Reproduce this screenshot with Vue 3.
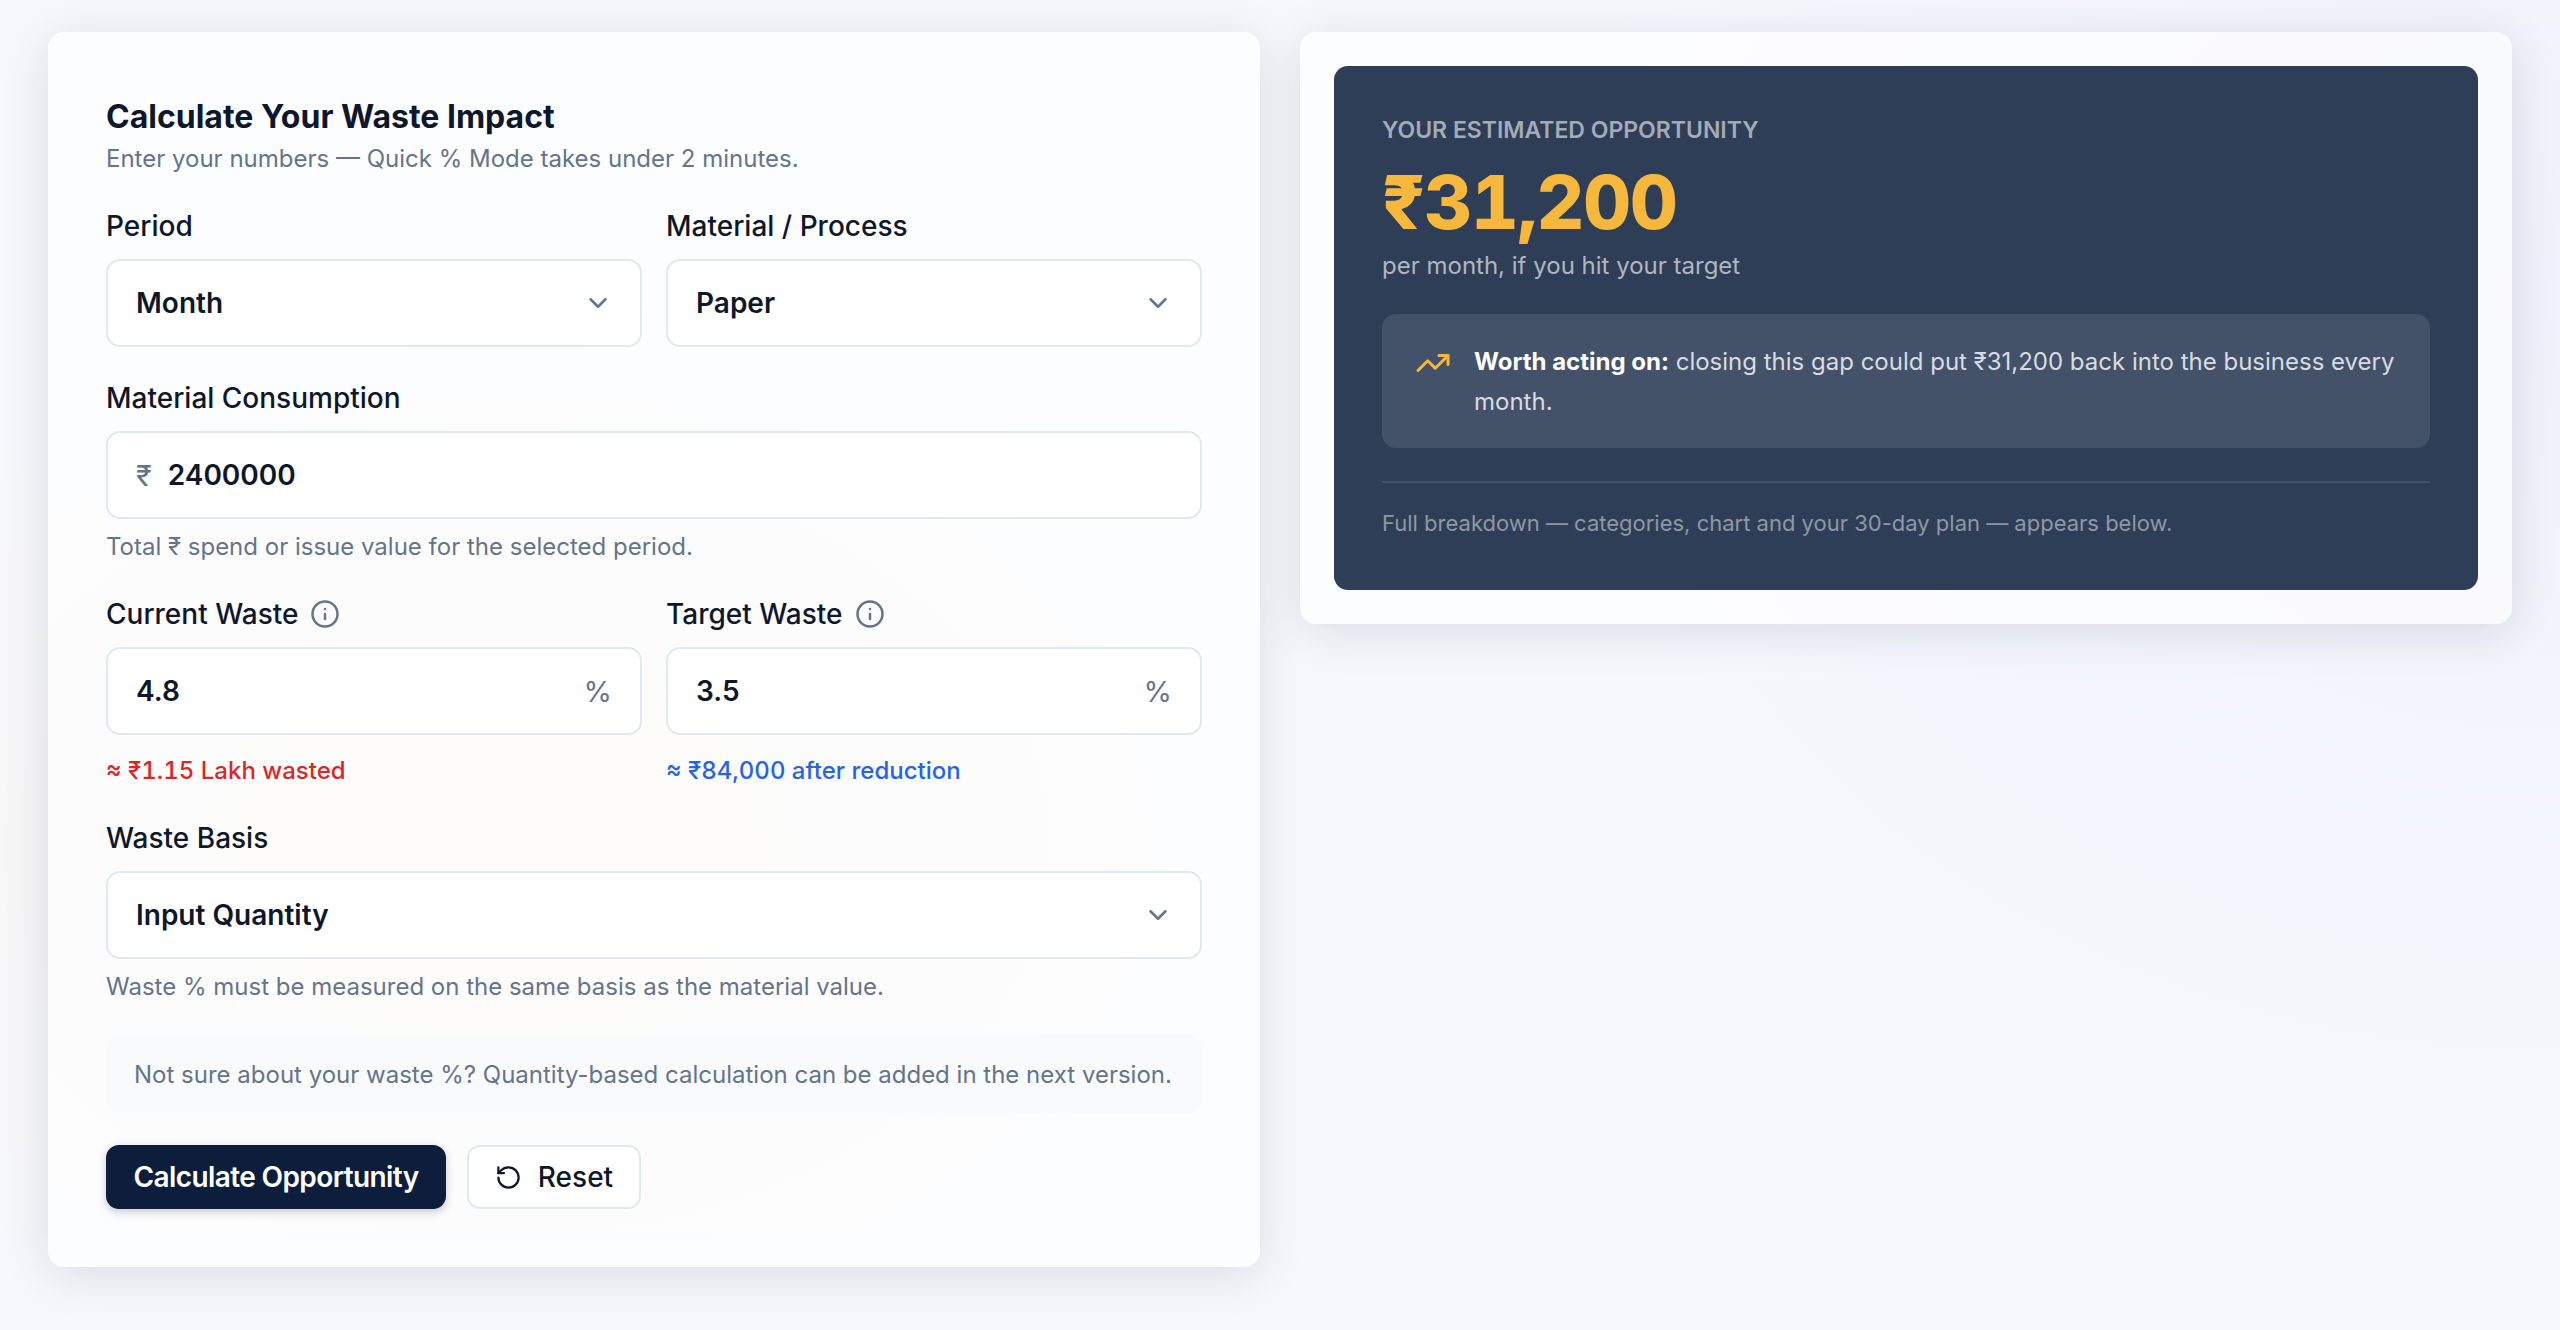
<template>
  <div class="page">
    <!-- форма -->
    <section class="card form-card">
      <h2 class="title">Calculate Your Waste Impact</h2>
      <p class="subtitle">Enter your numbers — Quick % Mode takes under 2 minutes.</p>

      <div class="two-col row">
        <div class="group">
          <label class="label">Period</label>
          <div class="field">
            <select class="control">
              <option v-for="p in periods" :key="p">{{ p }}</option>
            </select>
            <svg class="chevron" viewBox="0 0 24 24"><path d="m6 9 6 6 6-6" /></svg>
          </div>
        </div>
        <div class="group">
          <label class="label">Material / Process</label>
          <div class="field">
            <select class="control">
              <option v-for="m in materials" :key="m">{{ m }}</option>
            </select>
            <svg class="chevron" viewBox="0 0 24 24"><path d="m6 9 6 6 6-6" /></svg>
          </div>
        </div>
      </div>

      <div class="group row">
        <label class="label">Material Consumption</label>
        <div class="field">
          <span class="prefix">₹</span>
          <input class="control" :value="consumption" />
        </div>
        <p class="hint">Total ₹ spend or issue value for the selected period.</p>
      </div>

      <div class="two-col row">
        <div class="group" v-for="w in wasteFields" :key="w.label">
          <label class="label">
            {{ w.label }}
            <svg class="info" viewBox="0 0 24 24">
              <circle cx="12" cy="12" r="10" />
              <path d="M12 16v-4M12 8h.01" />
            </svg>
          </label>
          <div class="field">
            <input class="control" :value="w.value" />
            <span class="suffix">%</span>
          </div>
          <p class="result" :class="w.tone">{{ w.note }}</p>
        </div>
      </div>

      <div class="group row">
        <label class="label">Waste Basis</label>
        <div class="field">
          <select class="control">
            <option>Input Quantity</option>
            <option>Output Quantity</option>
          </select>
          <svg class="chevron" viewBox="0 0 24 24"><path d="m6 9 6 6 6-6" /></svg>
        </div>
        <p class="hint">Waste % must be measured on the same basis as the material value.</p>
      </div>

      <div class="note">Not sure about your waste %? Quantity-based calculation can be added in the next version.</div>

      <div class="actions">
        <button class="btn btn-primary">Calculate Opportunity</button>
        <button class="btn btn-reset">
          <svg class="reset-icon" viewBox="0 0 24 24">
            <path d="M3 12a9 9 0 1 0 9-9 9.75 9.75 0 0 0-6.74 2.74L3 8" />
            <path d="M3 3v5h5" />
          </svg>
          Reset
        </button>
      </div>
    </section>

    <!-- результат -->
    <section class="card result-card">
      <div class="panel">
        <div class="eyebrow">YOUR ESTIMATED OPPORTUNITY</div>
        <div class="amount">₹31,200</div>
        <div class="per">per month, if you hit your target</div>

        <div class="callout">
          <svg class="trend" viewBox="0 0 24 24">
            <path d="M22 7l-8.5 8.5-5-5L2 17" />
            <path d="M16 7h6v6" />
          </svg>
          <p><strong>Worth acting on:</strong> closing this gap could put ₹31,200 back into the business every month.</p>
        </div>

        <div class="footnote">Full breakdown — categories, chart and your 30-day plan — appears below.</div>
      </div>
    </section>
  </div>
</template>

<script setup>
import { ref } from 'vue'

const periods = ['Month', 'Quarter', 'Year']
const materials = ['Paper', 'Ink', 'Plastic']
const consumption = ref('2400000')

const wasteFields = [
  { label: 'Current Waste', value: '4.8', note: '≈ ₹1.15 Lakh wasted', tone: 'red' },
  { label: 'Target Waste', value: '3.5', note: '≈ ₹84,000 after reduction', tone: 'blue' }
]
</script>

<style>
html, body {
  background: #f7f8fd;
}
</style>

<style scoped>
.page {
  box-sizing: border-box;
  min-height: 1330px;
  padding: 32px 48px;
  display: grid;
  grid-template-columns: minmax(0, 1fr) minmax(0, 1fr);
  gap: 40px;
  align-items: start;
  font-family: Inter, "Noto Sans", sans-serif;
  color: #0f172a;
  /* тёплое пятно слева и холодное справа */
  background:
    radial-gradient(800px 560px at 500px 850px, #f8f5f0 0%, rgba(248, 245, 240, 0) 100%) 0 0 / 1400px 1235px no-repeat,
    radial-gradient(1000px 800px at 2560px 300px, #eff1fc 0%, rgba(239, 241, 252, 0) 100%),
    #f7f8fd;
}

.card {
  background: rgba(255, 255, 255, 0.65);
  border-radius: 16px;
  box-shadow: 0 8px 48px rgba(15, 23, 42, 0.12);
}

.form-card {
  box-sizing: border-box;
  padding: 65px 58px 58px;
}

.title {
  margin: 0;
  font-size: 32px;
  line-height: 40px;
  font-weight: 700;
}

.subtitle {
  margin: 6px 0 0;
  font-size: 24px;
  line-height: 32px;
  color: #64748b;
}

.two-col {
  display: grid;
  grid-template-columns: minmax(0, 1fr) minmax(0, 1fr);
  gap: 24px;
}

.row { margin-top: 32px; }

.label {
  display: flex;
  align-items: center;
  gap: 12px;
  font-size: 28px;
  font-weight: 500;
  line-height: 38px;
  margin-bottom: 14px;
}

.field {
  position: relative;
  box-sizing: border-box;
  height: 88px;
  display: flex;
  align-items: center;
  background: #fff;
  border: 2px solid #e2e8f0;
  border-radius: 14px;
  padding: 0 28px;
}

.control {
  flex: 1;
  min-width: 0;
  border: none;
  outline: none;
  background: transparent;
  padding: 0;
  appearance: none;
  font-family: inherit;
  font-size: 28px;
  font-weight: 600;
  color: #0f172a;
}

.chevron {
  position: absolute;
  right: 27px;
  top: 50%;
  width: 30px;
  height: 30px;
  margin-top: -15px;
  fill: none;
  stroke: #64748b;
  stroke-width: 2;
  stroke-linecap: round;
  stroke-linejoin: round;
  pointer-events: none;
}

.prefix {
  margin-right: 16px;
  font-size: 29px;
  color: #64748b;
}

.suffix {
  font-size: 29px;
  color: #64748b;
}

.info {
  width: 30px;
  height: 30px;
  fill: none;
  stroke: #64748b;
  stroke-width: 2;
  stroke-linecap: round;
  stroke-linejoin: round;
}

.hint {
  margin: 12px 0 0;
  font-size: 24px;
  line-height: 32px;
  color: #64748b;
}

.result {
  margin: 20px 0 0;
  font-size: 24px;
  line-height: 32px;
  font-weight: 500;
  font-variant-numeric: tabular-nums;
}

.result.red { color: #dc2626; }
.result.blue { color: #2563eb; }

.note {
  margin-top: 32px;
  height: 78px;
  box-sizing: border-box;
  padding: 0 28px;
  display: flex;
  align-items: center;
  background: #f8fafc;
  border-radius: 14px;
  font-size: 24px;
  color: #64748b;
  white-space: nowrap;
}

.actions {
  display: flex;
  gap: 21px;
  margin-top: 32px;
}

.btn {
  box-sizing: border-box;
  height: 64px;
  border-radius: 13px;
  font-family: inherit;
  font-size: 28px;
  font-weight: 600;
  display: flex;
  align-items: center;
  cursor: pointer;
}

.btn-primary {
  width: 340px;
  justify-content: center;
  border: none;
  color: #fff;
  background: #0c1e3c;
  letter-spacing: -0.6px;
  box-shadow: 0 3px 8px rgba(15, 23, 42, 0.22);
}

.btn-reset {
  width: 174px;
  justify-content: center;
  gap: 16px;
  background: #fff;
  color: #0f172a;
  font-weight: 500;
  border: 2px solid #e2e8f0;
}

.reset-icon {
  width: 27px;
  height: 27px;
  fill: none;
  stroke: #0f172a;
  stroke-width: 2;
  stroke-linecap: round;
  stroke-linejoin: round;
}

.result-card {
  padding: 34px;
}

.panel {
  box-sizing: border-box;
  height: 524px;
  padding: 48px;
  background: #2e3e57;
  border-radius: 14px;
}

.eyebrow {
  font-size: 23px;
  line-height: 32px;
  font-weight: 600;
  color: #a3abb8;
}

.amount {
  margin-top: 13px;
  font-size: 74px;
  line-height: 86px;
  font-weight: 800;
  color: #f5b83d;
  letter-spacing: -1px;
  font-variant-numeric: tabular-nums;
}

.per {
  margin-top: 4px;
  font-size: 24px;
  line-height: 34px;
  color: #b0b6c1;
}

.callout {
  display: flex;
  gap: 23px;
  margin-top: 31px;
  padding: 28px 30px 26px 34px;
  background: #435268;
  border-radius: 14px;
}

.trend {
  flex: none;
  width: 36px;
  height: 36px;
  margin: 3px 0 0 -1px;
  fill: none;
  stroke: #f5b83d;
  stroke-width: 2;
  stroke-linecap: round;
  stroke-linejoin: round;
}

.callout p {
  margin: 0;
  font-size: 24px;
  line-height: 40px;
  color: #d8dce2;
}

.callout strong {
  color: #fff;
  font-weight: 700;
}

.footnote {
  margin-top: 33px;
  padding-top: 24px;
  border-top: 2px solid #435268;
  font-size: 22px;
  line-height: 32px;
  color: #8f97a5;
}
</style>
